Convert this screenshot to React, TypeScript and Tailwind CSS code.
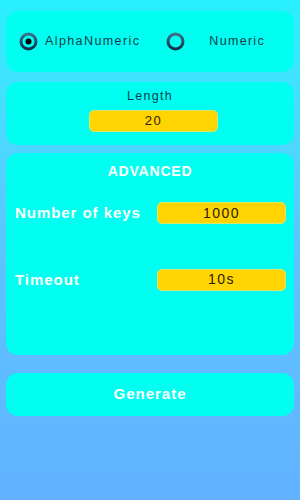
export default function App() {
  return (
    <div className="h-[500px] w-[300px] bg-gradient-to-b from-[#26f0ff] via-[#5cc4ff] to-[#62b2ff] px-[6px] pt-[11px] font-['Liberation_Sans',Arial,sans-serif]">
      <div className="flex h-[61px] items-center rounded-[12px] bg-[#00fff0] pl-[13px] pr-[29px]">
        <div className="flex items-center gap-[7px]">
          <Radio checked />
          <span className="text-[12.5px] tracking-[1.4px] text-[#0d3d4d]">AlphaNumeric</span>
        </div>
        <div className="ml-[26px] flex flex-1 items-center justify-between">
          <Radio />
          <span className="text-[12.5px] tracking-[1.3px] text-[#0d3d4d]">Numeric</span>
        </div>
      </div>

      <div className="mt-[10px] flex h-[63px] flex-col items-center rounded-[12px] bg-[#00fff0] pt-[5px]">
        <span className="text-[12.5px] tracking-[1.3px] text-[#0d3d4d]">Length</span>
        <div className="ml-[7px] mt-[4px] flex h-[22px] w-[129px] items-center justify-center rounded-[5px] border border-[#d6e86a] bg-[#ffd400] text-[13px] tracking-[1.5px] text-[#2a2000]">
          20
        </div>
      </div>

      <div className="mt-[8px] flex h-[202px] flex-col rounded-[12px] bg-[#00fff0] px-[8px] pt-[8px]">
        <div className="text-center text-[14px] font-bold tracking-[0.8px] text-white">ADVANCED</div>
        <div className="mt-[20px] flex items-center justify-between pl-[1px]">
          <span className="text-[15px] font-bold tracking-[0.95px] text-white">Number of keys</span>
          <Field value="1000" />
        </div>
        <div className="mt-[44px] flex items-center justify-between pl-[1px]">
          <span className="text-[15px] font-bold tracking-[0.95px] text-white">Timeout</span>
          <Field value="10s" />
        </div>
      </div>

      <button className="mt-[18px] flex h-[43px] w-full items-center justify-center rounded-[12px] bg-[#00fff0] text-[15px] font-bold tracking-[1px] text-white">
        Generate
      </button>
    </div>
  );
}

function Field({ value }: { value: string }) {
  return (
    <div className="flex h-[22px] w-[129px] items-center justify-center rounded-[5px] border border-[#d6e86a] bg-[#ffd400] text-[14px] tracking-[1.5px] text-[#2a2000]">
      {value}
    </div>
  );
}

function Radio({ checked = false }: { checked?: boolean }) {
  return (
    <svg width="19" height="19" viewBox="0 0 19 19">
      <defs>
        <linearGradient id={checked ? "rg1" : "rg2"} x1="0" y1="0" x2="0" y2="1">
          <stop offset="0" stopColor="#3f6f8a" />
          <stop offset="1" stopColor="#0d2f4a" />
        </linearGradient>
      </defs>
      <circle cx="9.5" cy="9.5" r="7.5" fill="none" stroke={`url(#${checked ? "rg1" : "rg2"})`} strokeWidth="3" />
      {checked && <circle cx="9.5" cy="9.5" r="3" fill="#000" />}
    </svg>
  );
}
